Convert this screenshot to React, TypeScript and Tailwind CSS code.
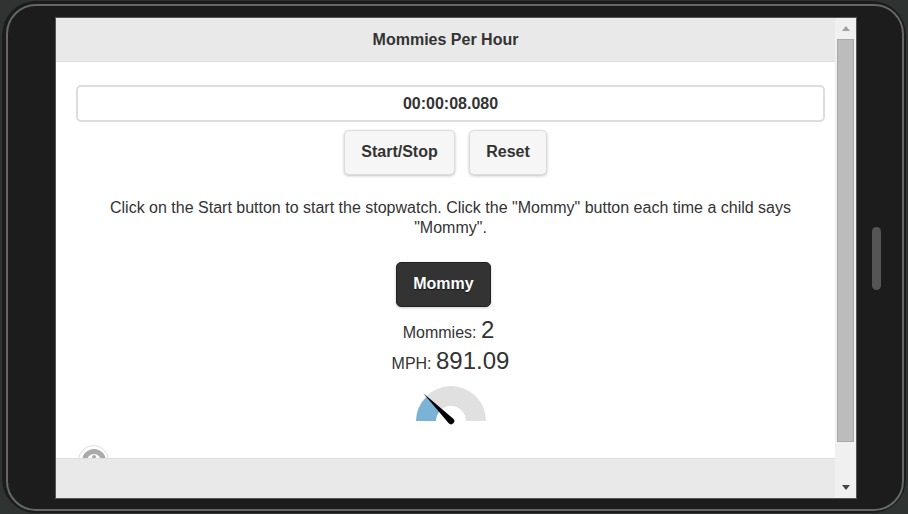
export default function App() {
  return (
    <div className="w-[908px] h-[514px] overflow-hidden bg-[#2f3432] px-[2px] py-[1px]" style={{ fontFamily: '"Liberation Sans", Arial, sans-serif' }}>
      <div className="w-full h-full rounded-[34px] bg-[#1c1c1c] pl-[4px] pr-[2px] pt-[3px] pb-[2px]">
        <div className="w-full h-full rounded-[30px] border-2 border-[#666666] flex items-start pl-[48px] pt-[12px]">
          <div className="w-[800px] h-[480px] flex bg-white overflow-hidden shrink-0 outline outline-1 outline-[#555555]">
            <div className="w-[779px] h-full flex flex-col relative text-[#333333]">
              <div className="h-[44px] shrink-0 bg-[#e9e9e9] border-b border-[#dddddd] flex items-center justify-center text-[16px] font-bold">
                Mommies Per Hour
              </div>
              <div className="flex-1 flex flex-col items-center pl-[20px] pr-[10px] pt-[23px] min-h-0">
                <div className="w-full h-[37px] shrink-0 rounded-[5px] border-2 border-[#dddddd] flex items-center justify-center font-bold text-[16px]">
                  00:00:08.080
                </div>
                <div className="flex gap-[14px] mt-[8px] mr-[10px]">
                  <div className="w-[111px] h-[45px] pb-[2px] rounded-[5px] border border-[#dddddd] bg-[#f6f6f6] shadow-[0_1px_3px_rgba(0,0,0,0.25)] flex items-center justify-center font-bold text-[16px]">
                    Start/Stop
                  </div>
                  <div className="w-[78px] h-[45px] pb-[2px] rounded-[5px] border border-[#dddddd] bg-[#f6f6f6] shadow-[0_1px_3px_rgba(0,0,0,0.25)] flex items-center justify-center font-bold text-[16px]">
                    Reset
                  </div>
                </div>
                <p className="mt-[23px] w-[720px] text-center text-[16px] leading-[20px]">
                  Click on the Start button to start the stopwatch. Click the "Mommy" button each time a child says "Mommy".
                </p>
                <div className="mt-[24px] mr-[14px] w-[95px] h-[45px] pb-[2px] rounded-[5px] border border-[#222222] bg-[#333333] shadow-[0_1px_3px_rgba(0,0,0,0.2)] flex items-center justify-center font-bold text-[16px] text-white [text-shadow:0_1px_1px_#111]">
                  Mommy
                </div>
                <div className="mt-[5px] mr-[4px] h-[31px] flex items-baseline text-[16px]">
                  Mommies:&nbsp;<span className="text-[24px]">2</span>
                </div>
                <div className="h-[31px] flex items-baseline text-[16px]">
                  MPH:&nbsp;<span className="text-[24px]">891.09</span>
                </div>
                <svg className="mt-[12px] shrink-0" width="73" height="40" viewBox="0 0 73 40">
                  <path d="M2 35 A35 35 0 0 1 72 35 L52 35 A15 15 0 0 0 22 35 Z" fill="#e0e0e0" />
                  <path d="M2 35 A35 35 0 0 1 12.7 10.7 L26.4 24.4 A15 15 0 0 0 22 35 Z" fill="#7ab3d6" />
                  <path d="M9.3 7.3 L39.3 32.7 A3.2 3.2 0 1 1 34.7 37.3 Z" fill="#000000" />
                </svg>
              </div>
              <div className="absolute left-[22px] top-[427px] w-[31px] h-[31px] rounded-full border border-[#dddddd] bg-white flex items-center justify-center">
                <div className="w-[24px] h-[24px] rounded-full border-[5px] border-[#aaaaaa] flex justify-center pt-[1px]">
                  <div className="w-[4px] h-[4px] rounded-full bg-[#aaaaaa]" />
                </div>
              </div>
              <div className="absolute left-0 right-0 bottom-0 h-[40px] bg-[#e9e9e9] border-t border-[#dddddd]" />
            </div>
            <div className="w-[21px] h-full bg-[#f0f0f0] flex flex-col items-center shrink-0">
              <div className="h-[21px] flex items-center justify-center">
                <svg width="8" height="5" viewBox="0 0 8 5"><path d="M4 0 L8 5 L0 5 Z" fill="#a0a0a0" /></svg>
              </div>
              <div className="w-[17px] h-[403px] bg-[#bcbcbc] border border-[#a8a8a8]" />
              <div className="flex-1 flex items-end pb-[8px]">
                <svg width="8" height="5" viewBox="0 0 8 5"><path d="M0 0 L8 0 L4 5 Z" fill="#444444" /></svg>
              </div>
            </div>
          </div>
          <div className="ml-[16px] mt-[209px] w-[9px] h-[63px] rounded-full bg-[#555555]" />
        </div>
      </div>
    </div>
  );
}
